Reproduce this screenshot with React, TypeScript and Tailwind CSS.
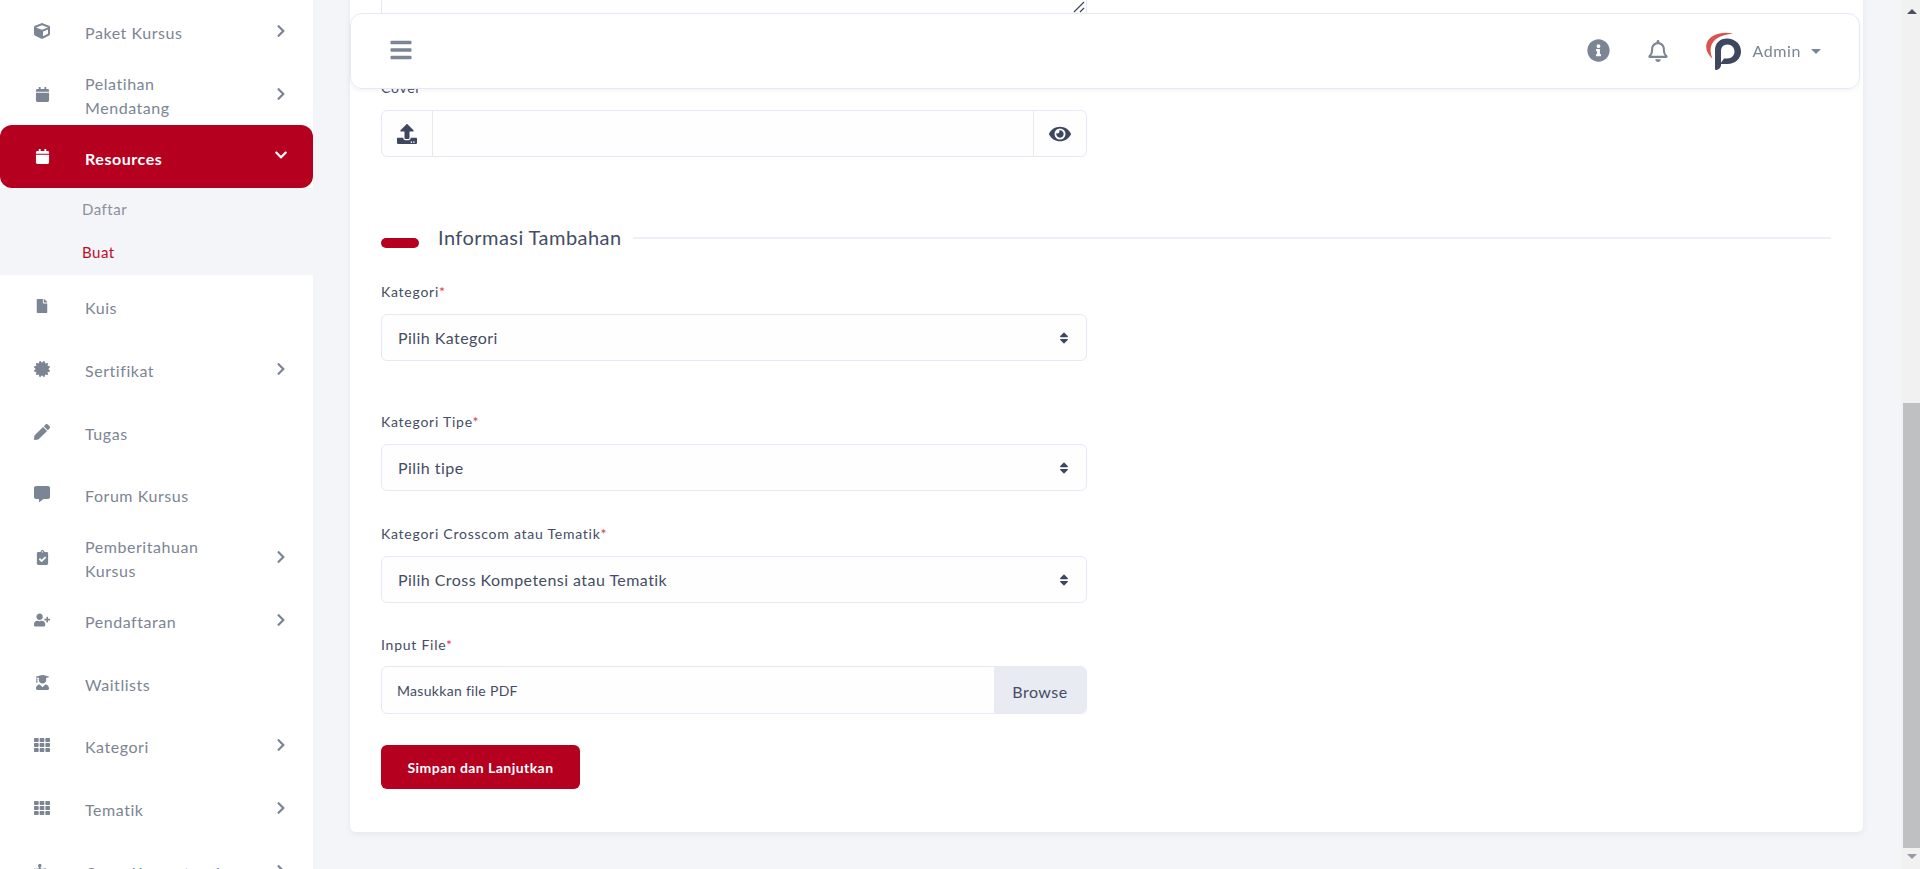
import React from "react";
import {
  FaCube, FaCalendar, FaFile, FaCertificate, FaPen, FaCommentAlt, FaClipboardCheck, FaUserPlus,
  FaUserGraduate, FaTh, FaPuzzlePiece, FaChevronRight, FaChevronDown, FaBars, FaInfoCircle,
  FaRegBell, FaEye, FaSort, FaUpload,
} from "react-icons/fa";

const FONT = "font-['Lato','Noto_Sans',sans-serif]";

function NavRow({ icon: Icon, label, arrow, active, size = 16 }: { icon: any; label: React.ReactNode; arrow?: boolean; active?: boolean; size?: number }) {
  return (
    <div className={`h-[62.7px] shrink-0 flex items-center pl-[34px] pr-[24px] ${active ? "bg-[#b5001f] text-white rounded-xl" : "text-[#7c8593]"}`}>
      <div className="w-[16px] flex justify-center mr-[35px]">
        <Icon size={size} />
      </div>
      <div className={`flex-1 pt-[4px] text-[16px] leading-[24px] tracking-[0.55px] ${active ? "font-bold" : ""}`}>{label}</div>
      {arrow && (active ? <FaChevronDown size={14} className="mb-[4px] mr-[1px]" /> : <FaChevronRight size={14} className="mr-[1px]" />)}
    </div>
  );
}

function Sidebar() {
  return (
    <aside className="w-[313px] h-full shrink-0 bg-white overflow-hidden flex flex-col">
      <NavRow icon={FaCube} label="Paket Kursus" arrow />
      <NavRow icon={FaCalendar} label={<>Pelatihan<br />Mendatang</>} arrow size={15} />
      <NavRow icon={FaCalendar} label="Resources" arrow active size={15} />
      <div className="h-[87px] shrink-0 bg-[#f4f5f8] pl-[82px] pt-[9px] text-[15px] tracking-[0.5px]">
        <div className="h-[44px] leading-[24px] pt-[0px] text-[#8a919d]">Daftar</div>
        <div className="h-[43px] text-[#bd0d27]">Buat</div>
      </div>
      <NavRow icon={FaFile} label="Kuis" size={14} />
      <NavRow icon={FaCertificate} label="Sertifikat" arrow />
      <NavRow icon={FaPen} label="Tugas" />
      <NavRow icon={FaCommentAlt} label="Forum Kursus" />
      <NavRow icon={FaClipboardCheck} label={<>Pemberitahuan<br />Kursus</>} arrow size={15} />
      <NavRow icon={FaUserPlus} label="Pendaftaran" arrow size={20} />
      <NavRow icon={FaUserGraduate} label="Waitlists" size={15} />
      <NavRow icon={FaTh} label="Kategori" arrow />
      <NavRow icon={FaTh} label="Tematik" arrow />
      <NavRow icon={FaPuzzlePiece} label="Cross Kompetensi" arrow />
    </aside>
  );
}

function Logo() {
  return (
    <svg width="36" height="38" viewBox="0 0 36 38" className="block">
      <path d="M27 1.5C17 -1 3 2 0.5 12 -0.8 18 2.5 23 6.5 26.5 3.5 20 3.5 12 10 7 15 3.5 21 2.5 27 1.5Z" fill="#d9534f" />
      <path d="M10 38C9 38 9 37 9 36L9 18C9 11 14 6.5 21 6.5 29 6.5 35 12 35 19.5 35 27 29 32 21.5 32L14 32 18 26.5 21.5 26.5C25.5 26.5 28.5 23.5 28.5 19.5 28.5 15.5 25.5 12.5 21.5 12.5 17.5 12.5 15 15.3 15 19L15 33C15 35.5 12.5 38 10 38Z" fill="#3e4660" />
    </svg>
  );
}

function Navbar() {
  return (
    <header className="absolute left-[37px] right-[41px] top-[13px] h-[76px] z-10 flex items-center bg-white/95 backdrop-blur-sm border border-[#e6e8f5] rounded-xl shadow-[0_2px_4px_rgba(60,70,100,0.06)] pl-[38px] pr-[38px] text-[#7c8593]">
      <FaBars size={24} className="scale-x-[1] -mt-[2px]" />
      <div className="flex-1" />
      <FaInfoCircle size={23} className="-mt-[1px]" />
      <FaRegBell size={22} className="ml-[37px] -mt-[1px]" />
      <div className="ml-[37px] -mt-[1px]"><Logo /></div>
      <span className="ml-[10px] text-[16px] tracking-[0.6px]">Admin</span>
      <span className="ml-[10px] w-0 h-0 border-x-[5px] border-x-transparent border-t-[5px] border-t-[#7c8593]" />
    </header>
  );
}

function Label({ text, req = true }: { text: string; req?: boolean }) {
  return (
    <div className="text-[14px] leading-[24px] tracking-[0.75px] text-[#454d64]">
      {text}
      {req && <span className="text-[#d8384f]">*</span>}
    </div>
  );
}

function SelectBox({ text }: { text: string }) {
  return (
    <div className="w-[706px] h-[47px] mt-[10px] flex items-center justify-between pl-[16px] pr-[15px] border border-[#e6e8f5] rounded-md bg-[#fefefe] text-[16px] tracking-[0.45px] text-[#454d64]">
      <span>{text}</span>
      <FaSort size={14} className="text-[#3e4660]" />
    </div>
  );
}

function Form() {
  return (
    <section className="-mt-[40px] bg-white rounded-md shadow-[0_2px_6px_rgba(60,70,100,0.08)] px-[31px] pb-[43px]">
      <div className="relative w-[706px] h-[54px] border-x border-b border-[#e6e8f5] bg-[#fefefe]">
        <svg width="12" height="12" viewBox="0 0 12 12" className="absolute right-[1px] bottom-0 text-[#3e4660]">
          <path d="M1 11 11 1M7 11 11 7" stroke="currentColor" strokeWidth="1.2" />
        </svg>
      </div>
      <div className="h-[18px] mt-[10px] text-[13px] leading-[18px] tracking-[0.5px] text-[#8a919d] whitespace-nowrap">
        Masukkan deskripsi singkat mengenai resources yang akan dibuat pada kolom di atas ini
      </div>
      <div className="mt-[34px]"><Label text="Cover" req={false} /></div>
      <div className="w-[706px] h-[47px] mt-[10px] flex border border-[#e6e8f5] rounded-md bg-[#fefefe] text-[#3e4660]">
        <div className="w-[51px] flex items-center justify-center border-r border-[#e6e8f5]"><FaUpload size={20} /></div>
        <div className="flex-1" />
        <div className="w-[53px] flex items-center justify-center border-l border-[#e6e8f5]"><FaEye size={22} /></div>
      </div>

      <div className="flex items-start h-[30px] mt-[65px]">
        <div className="w-[38px] h-[10px] mt-[16px] rounded-full bg-[#b5001f]" />
        <div className="ml-[19px] text-[20px] leading-[30px] tracking-[0.45px] text-[#454d64]">Informasi Tambahan</div>
        <div className="flex-1 h-[2px] mt-[15px] ml-[11px] mr-[1px] bg-[#eff0f5]" />
      </div>

      <div className="mt-[28px]"><Label text="Kategori" /></div>
      <SelectBox text="Pilih Kategori" />

      <div className="mt-[49px]"><Label text="Kategori Tipe" /></div>
      <SelectBox text="Pilih tipe" />

      <div className="mt-[31px]"><Label text="Kategori Crosscom atau Tematik" /></div>
      <SelectBox text="Pilih Cross Kompetensi atau Tematik" />

      <div className="mt-[30px]"><Label text="Input File" /></div>
      <div className="w-[706px] h-[48px] mt-[9px] flex items-stretch border border-[#e6e8f5] rounded-md bg-[#fefefe] overflow-hidden text-[#454d64]">
        <div className="flex-1 flex items-center pl-[15px] text-[14px] tracking-[0.3px]">Masukkan file PDF</div>
        <div className="w-[92px] flex items-center justify-center pt-[3px] bg-[#e9ebf2] text-[16px] tracking-[0.5px]">Browse</div>
      </div>

      <button className="block w-[199px] h-[44px] mt-[31px] rounded-md bg-[#b5001f] text-white text-[14px] font-bold tracking-[0.45px]">
        Simpan dan Lanjutkan
      </button>
    </section>
  );
}

function Scrollbar() {
  return (
    <div className="w-[19px] h-full shrink-0 bg-[#f1f1f2] flex flex-col items-center pl-[2px]">
      <div className="w-0 h-0 mt-[9px] border-x-[5px] border-x-transparent border-b-[5px] border-b-[#4a4f63]" />
      <div className="w-[17px] h-[445px] mt-[389px] bg-[#bfc0c2]" />
      <div className="w-0 h-0 mt-[6px] border-x-[5px] border-x-transparent border-t-[5px] border-t-[#9a9ca3]" />
    </div>
  );
}

export default function App() {
  return (
    <div className={`${FONT} w-[1920px] h-[869px] overflow-hidden flex bg-[#f4f5f8]`}>
      <Sidebar />
      <main className="relative flex-1 h-full overflow-hidden pl-[37px] pr-[38px]">
        <Navbar />
        <Form />
      </main>
      <Scrollbar />
    </div>
  );
}
